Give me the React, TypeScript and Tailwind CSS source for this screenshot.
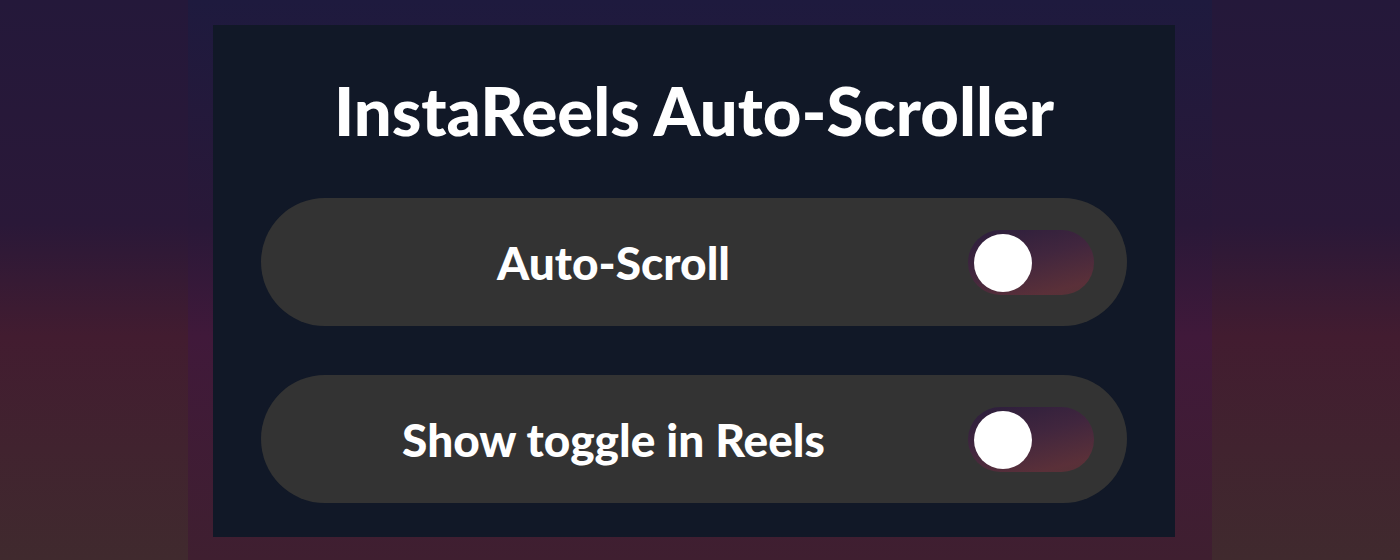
import React, { useState } from 'react';

const Toggle: React.FC<{ on: boolean; onChange: () => void }> = ({ on, onChange }) => (
  <button
    onClick={onChange}
    className="relative h-[65px] w-[126px] shrink-0 rounded-full bg-[linear-gradient(165deg,#2b1e3c_0%,#41263e_45%,#5a3039_85%,#563236_100%)]"
  >
    <span
      className={`absolute top-[4px] h-[58px] w-[58px] rounded-full bg-white transition-all ${on ? 'left-[62px]' : 'left-[6px]'}`}
    />
  </button>
);

const SettingRow: React.FC<{ label: string }> = ({ label }) => {
  const [on, setOn] = useState(false);
  return (
    <div className="flex h-[128px] items-center rounded-full bg-[#333333] pl-[32px] pr-[33px]">
      <span className="flex-1 pr-[34px] text-center text-[46px] font-black text-white">{label}</span>
      <Toggle on={on} onChange={() => setOn(!on)} />
    </div>
  );
};

export default function App() {
  return (
    <div className="h-[560px] w-full overflow-hidden bg-[linear-gradient(180deg,#24183a_0%,#2a1838_40%,#421c30_60%,#402a2e_100%)] font-['Lato',sans-serif]">
      <div className="mx-auto h-full w-[1024px] bg-[linear-gradient(180deg,#1e1a3e_0%,#291838_40%,#40193a_60%,#3f1f30_100%)] pl-[25px] pr-[37px] pt-[25px]">
        <div className="flex h-[512px] flex-col bg-[#111827] px-[48px]">
          <h1 className="mt-[52px] text-center text-[67px] leading-none font-black text-white">InstaReels Auto-Scroller</h1>
          <div className="mt-[54px] flex flex-col gap-[49px]">
            <SettingRow label="Auto-Scroll" />
            <SettingRow label="Show toggle in Reels" />
          </div>
        </div>
      </div>
    </div>
  );
}
